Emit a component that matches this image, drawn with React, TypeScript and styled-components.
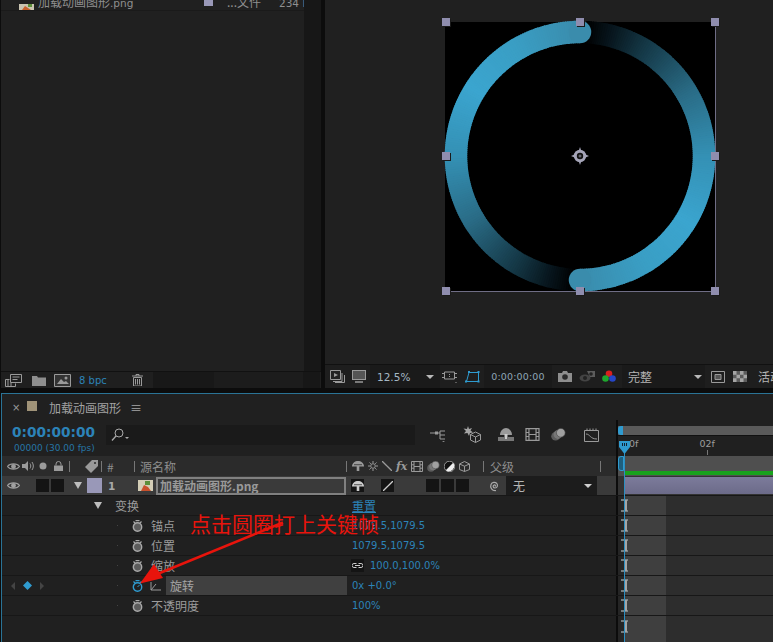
import React from "react";
import styled, { createGlobalStyle } from "styled-components";

const BLUE = "#2c83b8";
const CJK = `"Noto Sans CJK SC", "DejaVu Sans", sans-serif`;
const LATIN = `"DejaVu Sans", "Noto Sans CJK SC", sans-serif`;

const Global = createGlobalStyle`
    html, body { margin: 0; padding: 0; background: #0c0c0c; overflow: hidden; }
    * { box-sizing: border-box; }
`;

const Page = styled.div`
    position: relative;
    width: 773px;
    height: 642px;
    overflow: hidden;
    background: #0c0c0c;
    color: #a2a2a2;
    font-family: ${CJK};
    font-size: 12px;
`;

const TopArea = styled.div`
    display: flex;
    height: 388px;
    gap: 4px;
    padding-left: 1px;
`;

const ProjectPanel = styled.section`
    width: 320px;
    flex-shrink: 0;
    display: flex;
    flex-direction: column;
    background: #202020;
`;

const ProjectBody = styled.div`
    flex: 1;
    display: flex;
    min-height: 0;
`;

const FileList = styled.div`
    flex: 1;
    min-width: 0;
`;

const FileRow = styled.div`
    height: 11px;
    display: flex;
    align-items: flex-end;
    overflow: hidden;
    border-bottom: 1px solid #1a1a1a;
    padding-left: 18px;
    font-size: 12px;
`;

const FileText = styled.span<{ $w: number; $ml?: number }>`
    width: ${(p) => p.$w}px;
    margin-left: ${(p) => p.$ml ?? 0}px;
    flex-shrink: 0;
    line-height: 16px;
    height: 16px;
    white-space: nowrap;
    color: #8f8f8f;
`;

const FileLatin = styled.span`
    font-family: ${LATIN};
    font-size: 10.5px;
`;

const FileSwatch = styled.i`
    width: 9px;
    height: 6px;
    margin: 0 14px 4px 0;
    background: #9998b8;
`;

const ScrollTrack = styled.div`
    width: 17px;
    background: #171717;
`;

const ProjectFooter = styled.div`
    height: 17px;
    display: flex;
    align-items: center;
    border-top: 1px solid #111;
    background: #1f1f1f;
`;

const FootIcons = styled.div`
    width: 152px;
    display: flex;
    align-items: center;
    padding-left: 4px;
`;

const Depth = styled.span`
    font-family: ${LATIN};
    font-size: 10px;
    color: ${BLUE};
    margin: 0 25px 0 8px;
    white-space: nowrap;
`;

const FootField = styled.div<{ $w: number; $c: string }>`
    width: ${(p) => p.$w}px;
    height: 100%;
    background: ${(p) => p.$c};
`;

const ViewerPanel = styled.section`
    flex: 1;
    min-width: 0;
    display: flex;
    flex-direction: column;
    background: #202020;
`;

const Stage = styled.div`
    height: 365px;
    padding: 22px 0 0 120px;
    border-bottom: 1px solid #111;
`;

const Canvas = styled.div`
    position: relative;
    width: 271px;
    height: 270px;
    background: #000;
    border-right: 1px solid #6f6d85;
    border-bottom: 1px solid #6f6d85;
`;

const RingSvg = styled.svg`
    display: block;
    overflow: visible;
`;

const Handle = styled.i<{ $x: number; $y: number }>`
    position: absolute;
    left: ${(p) => p.$x}px;
    top: ${(p) => p.$y}px;
    width: 8px;
    height: 8px;
    background: #8f8dae;
    box-shadow: 1px 1px 0 #1a1a1a;
`;

const Anchor = styled.svg`
    position: absolute;
    left: 126px;
    top: 125px;
`;

const ViewerBar = styled.div`
    flex: 1;
    display: flex;
    align-items: center;
    overflow: hidden;
    padding-left: 5px;
    background: #1e1e1e;
`;

const BarIcon = styled.span<{ $ml?: number }>`
    display: flex;
    margin-left: ${(p) => p.$ml ?? 0}px;
    flex-shrink: 0;
`;

const ZoomField = styled.div`
    width: 70px;
    height: 100%;
    margin-left: 4px;
    flex-shrink: 0;
    display: flex;
    align-items: center;
    padding-left: 7px;
    background: #1a1a1a;
    font-family: ${LATIN};
    font-size: 10.5px;
    color: #a6b8c4;
`;

const TimeField = styled.div`
    width: 68px;
    height: 100%;
    margin-left: 4px;
    flex-shrink: 0;
    display: flex;
    align-items: center;
    justify-content: center;
    background: #1a1a1a;
    font-family: ${LATIN};
    font-size: 9.5px;
    letter-spacing: 0.15px;
    color: #8fa6b6;
`;

const QualityField = styled.div`
    width: 83px;
    height: 100%;
    margin-left: 6px;
    flex-shrink: 0;
    display: flex;
    align-items: center;
    justify-content: space-between;
    padding: 0 3px 0 6px;
    background: #1a1a1a;
    color: #b5b5b5;
`;

const ViewText = styled.span`
    margin-left: 11px;
    flex-shrink: 0;
    white-space: nowrap;
    color: #b5b5b5;
`;

const Caret = styled.i<{ $size?: number; $h?: number; $c?: string }>`
    width: 0;
    height: 0;
    flex-shrink: 0;
    border-left: ${(p) => p.$size ?? 4}px solid transparent;
    border-right: ${(p) => p.$size ?? 4}px solid transparent;
    border-top: ${(p) => p.$h ?? p.$size ?? 4}px solid ${(p) => p.$c ?? "#b8b8b8"};
`;

const TimelinePanel = styled.section`
    margin: 5px 0 0 1px;
    height: 249px;
    display: flex;
    flex-direction: column;
    background: #202020;
    border-top: 1px solid #2a7396;
    border-left: 1px solid #2a7396;
`;

const TabBar = styled.div`
    height: 26px;
    display: flex;
    align-items: center;
    padding-left: 10px;
    font-size: 12px;
`;

const TabClose = styled.span`
    width: 15px;
    font-size: 10px;
    font-family: ${LATIN};
    color: #9a9a9a;
`;

const TabSwatch = styled.i`
    width: 10px;
    height: 10px;
    margin: -2px 12px 0 0;
    background: #a09378;
`;

const TabMenu = styled.span`
    margin-left: 9px;
    font-size: 12px;
    color: #a5a5a5;
`;

const Split = styled.div<{ $h: number; $line?: string }>`
    height: ${(p) => p.$h}px;
    flex-shrink: 0;
    display: flex;
    border-bottom: ${(p) => (p.$line ? `1px solid ${p.$line}` : "none")};
`;

const LeftPane = styled.div<{ $bg?: string }>`
    width: 616px;
    flex-shrink: 0;
    display: flex;
    align-items: center;
    border-right: 2px solid #0c0c0c;
    background: ${(p) => p.$bg ?? "transparent"};
`;

const Track = styled.div<{ $bg?: string }>`
    flex: 1;
    position: relative;
    display: flex;
    flex-direction: column;
    background: ${(p) => p.$bg ?? "transparent"};
`;

const TimeCol = styled.div`
    width: 104px;
    padding: 3px 0 0 10px;
`;

const TimeCode = styled.div`
    font-family: ${LATIN};
    font-weight: 700;
    font-size: 13.7px;
    line-height: 17px;
    color: ${BLUE};
`;

const FrameCode = styled.div`
    font-family: ${LATIN};
    font-size: 9px;
    line-height: 15px;
    padding-left: 2px;
    white-space: nowrap;
    color: #2676a6;
`;

const SearchField = styled.div`
    width: 309px;
    height: 20px;
    margin-top: -7px;
    display: flex;
    align-items: center;
    padding-left: 5px;
    background: #1a1a1a;
`;

const ToolIcon = styled.span<{ $ml: number }>`
    display: flex;
    margin: -7px 0 0 ${(p) => p.$ml}px;
`;

const NavBar = styled.div`
    height: 9px;
    margin-top: 6px;
    display: flex;
    background: #5a5a5a;
`;

const NavHandle = styled.i`
    width: 5px;
    height: 100%;
    background: #2f9bd0;
    border-radius: 3px 0 0 3px;
`;

const Ruler = styled.div`
    flex: 1;
    display: flex;
    font-family: ${LATIN};
    font-size: 9.5px;
    color: #9c9c9c;
    border-top: 1px solid #111;
    padding: 2px 0 0 11px;
    line-height: 12px;
`;

const RulerLabel = styled.span`
    margin-left: 61px;
    display: flex;
    flex-direction: column;
    align-items: center;
`;

const Tick = styled.i`
    width: 1px;
    height: 5px;
    background: #777;
`;

const Cols = styled.div<{ $h: number }>`
    width: 100%;
    height: ${(p) => p.$h}px;
    display: flex;
    align-items: center;
`;

const Col = styled.div<{ $w: number; $pl?: number; $gap?: number }>`
    width: ${(p) => p.$w}px;
    height: 100%;
    flex-shrink: 0;
    display: flex;
    align-items: center;
    gap: ${(p) => p.$gap ?? 0}px;
    padding-left: ${(p) => p.$pl ?? 0}px;
`;

const Sep = styled.i`
    width: 1px;
    height: 11px;
    flex-shrink: 0;
    background: #777;
`;

const HeadText = styled.span<{ $ml: number }>`
    margin-left: ${(p) => p.$ml}px;
    color: #8e8e8e;
    white-space: nowrap;
`;

const FxText = styled.span`
    font-style: italic;
    font-family: "DejaVu Serif", serif;
    font-weight: 700;
    font-size: 11px;
    color: #9a9a9a;
`;

const HeadSlot = styled.span`
    width: 14px;
    display: flex;
    justify-content: center;
`;

const BlackBox = styled.i<{ $ml?: number }>`
    width: 13px;
    height: 13px;
    margin-left: ${(p) => p.$ml ?? 2}px;
    display: flex;
    align-items: center;
    justify-content: center;
    flex-shrink: 0;
    background: #141414;
`;

const Swatch = styled.i`
    width: 15px;
    height: 15px;
    background: #9998b8;
`;

const LayerNumber = styled.b`
    width: 36px;
    padding-left: 6px;
    flex-shrink: 0;
    font-family: ${LATIN};
    font-size: 10.5px;
    color: #a8a8a8;
`;

const NameField = styled.div`
    width: 190px;
    height: 18px;
    flex-shrink: 0;
    display: flex;
    align-items: center;
    padding-left: 2px;
    border: 2px solid #808080;
    font-weight: 700;
    font-size: 12px;
    white-space: nowrap;
    overflow: hidden;
    color: #999;
`;

const ParentField = styled.div`
    width: 91px;
    height: 100%;
    flex-shrink: 0;
    display: flex;
    align-items: center;
    justify-content: space-between;
    padding: 0 5px 0 7px;
    background: #1c1c1c;
    color: #b5b5b5;
`;

const LayerBar = styled.div`
    height: 17px;
    margin: 1px 0 0 6px;
    background: linear-gradient(#7c7b9b, #6c6b89);
`;

const GreenBar = styled.i`
    height: 4px;
    margin: 15px 0 0 6px;
    background: #19a11d;
`;

const WorkBracket = styled.i`
    position: absolute;
    left: 0;
    top: 0;
    width: 6px;
    height: 15px;
    border: 1px solid #2f9bd0;
    background: #1f5f7e;
    border-radius: 3px 0 0 3px;
`;

const PropLine = styled.div`
    height: 20px;
    flex-shrink: 0;
    display: flex;
    border-bottom: 1px solid #171717;
`;

const PropLeft = styled.div`
    width: 616px;
    flex-shrink: 0;
    display: flex;
    align-items: center;
    border-right: 2px solid #0c0c0c;
`;

const KeyCol = styled.div`
    width: 110px;
    display: flex;
    align-items: center;
    gap: 6px;
    padding-left: 7px;
    flex-shrink: 0;
`;

const DotMark = styled.i`
    width: 1px;
    height: 1px;
    margin-left: 5px;
    background: #444;
`;

const WatchSlot = styled.span`
    width: 16px;
    margin-left: 14px;
    display: flex;
    flex-shrink: 0;
`;

const PropName = styled.span`
    width: 201px;
    padding-left: 3px;
    white-space: nowrap;
    color: #9c9c9c;
    flex-shrink: 0;
`;

const GroupName = styled.span`
    width: 237px;
    margin-left: 17px;
    flex-shrink: 0;
    color: #9c9c9c;
`;

const TwirlSlot = styled.span`
    width: 96px;
    padding-left: 92px;
    display: flex;
    flex-shrink: 0;
`;

const GraphSlot = styled.span`
    margin-left: 2px;
    display: flex;
    flex-shrink: 0;
`;

const ActiveName = styled.span`
    width: 181px;
    height: 19px;
    margin: 0 5px;
    display: flex;
    align-items: center;
    padding-left: 4px;
    background: #404040;
    flex-shrink: 0;
    color: #a5a5a5;
`;

const Value = styled.span<{ $ml?: number }>`
    margin-left: ${(p) => p.$ml ?? 0}px;
    font-family: ${LATIN};
    font-size: 10px;
    color: ${BLUE};
    white-space: nowrap;
`;

const ResetLink = styled.span`
    color: ${BLUE};
    text-decoration: underline;
`;

const PropTrack = styled.div`
    flex: 1;
    display: flex;
    align-items: center;
    height: 100%;
`;

const Beam = styled.span`
    width: 10px;
    height: 100%;
    flex-shrink: 0;
    display: flex;
    align-items: center;
    padding-left: 3px;
    background: linear-gradient(90deg, #252525 6px, #3f3f3f 6px);
`;

const Bar = styled.span`
    width: 38px;
    height: 100%;
    background: #3f3f3f;
`;

const BarRest = styled.span`
    flex: 1;
    height: 100%;
    background: #2d2d2d;
`;

const PlayLine = styled.i`
    position: absolute;
    left: 624px;
    top: 452px;
    bottom: 0;
    width: 1px;
    background: #2c8fc2;
`;

const PlayHead = styled.svg`
    position: absolute;
    left: 618px;
    top: 441px;
`;

const Note = styled.div`
    position: absolute;
    left: 190px;
    top: 508px;
    font-size: 21px;
    line-height: 30px;
    white-space: nowrap;
    color: #e8140c;
`;

const NoteArrow = styled.svg`
    position: absolute;
    left: 0;
    top: 0;
    pointer-events: none;
`;

type IconProps = { c?: string };
const G = "#9a9a9a";

const Eye = ({ c = "#a0a0a0" }: IconProps) => (
    <svg width="13" height="9" viewBox="0 0 13 9">
        <path d="M.5 4.5C3 1 10 1 12.5 4.5 10 8 3 8 .5 4.5Z" fill="none" stroke={c} strokeWidth="1.2" />
        <circle cx="6.5" cy="4.5" r="2.4" fill={c} />
    </svg>
);
const Speaker = () => (
    <svg width="12" height="10" viewBox="0 0 12 10">
        <path d="M0 3h3l3-3v10L3 7H0Z" fill={G} />
        <path d="M8 2.5c1 1.500 1 3.500 0 5M10 1c1.800 2.500 1.800 5.500 0 8" fill="none" stroke={G} />
    </svg>
);
const Dot = () => (
    <svg width="8" height="8" viewBox="0 0 8 8"><circle cx="4" cy="4" r="3.500" fill={G} /></svg>
);
const Lock = () => (
    <svg width="9" height="10" viewBox="0 0 9 10">
        <path d="M2 4.500V3a2.500 2.500 0 0 1 5 0v1.500" fill="none" stroke={G} />
        <rect y="4.500" width="9" height="5.500" fill={G} />
    </svg>
);
const Tag = () => (
    <svg width="13" height="13" viewBox="0 0 13 13">
        <path d="M7 0h6v6l-7 7-6-6Z" fill={G} />
        <circle cx="10" cy="3" r="1" fill="#2b2b2b" />
    </svg>
);
const Shy = ({ c = G }: IconProps) => (
    <svg width="12" height="10" viewBox="0 0 12 10">
        <path d="M0 5.500C0 2 3 0 6 0s6 2 6 5.500Z" fill={c} />
        <rect x="4.700" y="5" width="2.600" height="5" fill={c} />
        <path d="M2 3.700h8" stroke="#222" strokeWidth=".7" />
    </svg>
);
const Sun = () => (
    <svg width="10" height="10" viewBox="0 0 10 10">
        <circle cx="5" cy="5" r="2.300" fill="none" stroke={G} />
        <path d="M5 0v2M5 8v2M0 5h2M8 5h2M1.500 1.500l1.300 1.300M7.200 7.200l1.300 1.300M8.500 1.500 7.200 2.800M2.800 7.200 1.500 8.500" stroke={G} />
    </svg>
);
const Slash = ({ c = G }: IconProps) => (
    <svg width="10" height="10" viewBox="0 0 10 10"><path d="M0 0l10 10" stroke={c} strokeWidth="1.300" /></svg>
);
const SlashUp = () => (
    <svg width="10" height="10" viewBox="0 0 10 10"><path d="M0 10 10 0" stroke="#ccc" strokeWidth="1.300" /></svg>
);
const Film = ({ w = 12, h = 11 }: { w?: number; h?: number }) => (
    <svg width={w} height={h} viewBox="0 0 12 11">
        <path d="M.5.5h11v10H.5ZM3 .5v10M9 .5v10M.5 3.800H3M.5 7.200H3M9 3.800h2.500M9 7.200h2.500M3 5.500h6" fill="none" stroke={G} />
    </svg>
);
const Spheres = ({ w = 13, h = 11 }: { w?: number; h?: number }) => (
    <svg width={w} height={h} viewBox="0 0 13 11">
        <circle cx="4" cy="7" r="3.800" fill="#5c5c5c" />
        <circle cx="6" cy="5.500" r="3.800" fill="#777" />
        <circle cx="8.500" cy="4" r="3.800" fill="#a0a0a0" stroke="#444" strokeWidth=".5" />
    </svg>
);
const HalfDisc = () => (
    <svg width="11" height="11" viewBox="0 0 11 11">
        <circle cx="5.500" cy="5.500" r="5.300" fill="#111" stroke="#ddd" strokeWidth=".6" />
        <path d="M9.200 1.800A5.300 5.300 0 0 1 1.800 9.200Z" fill="#eee" />
    </svg>
);
const Cube = () => (
    <svg width="11" height="11" viewBox="0 0 11 11">
        <path d="M5.500.5 10.500 3v5.500L5.500 10.500.5 8.500V3ZM.5 3l5 2.200 5-2.200M5.500 5.200v5.300" fill="none" stroke={G} />
    </svg>
);
const Stopwatch = ({ c = "#a8a8a8" }: IconProps) => (
    <svg width="11" height="12" viewBox="0 0 11 12">
        <circle cx="5.500" cy="7" r="4.200" fill={c === "#a8a8a8" ? "#5c5c5c" : "none"} stroke={c} strokeWidth="1.400" />
        <path d="M1.500 1.500 3 3M9.500 1.500 8 3M3.500 .7h4" stroke={c} strokeWidth="1.200" />
        {c !== "#a8a8a8" && <path d="M5.500 7 7.500 5" stroke={c} />}
    </svg>
);
const Twirl = () => <Caret $size={4.5} $h={7} $c="#bdbdbd" />;

const lerpStops: [number, number[]][] = [
    [0, [58, 140, 172]],
    [30, [58, 158, 196]],
    [58, [59, 165, 207]],
    [90, [52, 144, 180]],
    [120, [42, 108, 134]],
    [150, [20, 54, 68]],
    [166, [7, 20, 27]],
    [177, [0, 0, 0]],
];

function ringColor(deg: number) {
    for (let i = 1; i < lerpStops.length; i++) {
        const [b, cb] = lerpStops[i];
        const [a, ca] = lerpStops[i - 1];
        if (deg <= b) {
            const t = (deg - a) / (b - a);
            return `rgb(${ca.map((v, k) => Math.round(v + (cb[k] - v) * t)).join(",")})`;
        }
    }
    return "#000";
}

const RING_R = 124;

function Arc({ rotate }: { rotate: number }) {
    const r = RING_R;
    const pt = (d: number) => {
        const a = (d * Math.PI) / 180;
        return `${(-Math.sin(a) * r).toFixed(2)} ${(-Math.cos(a) * r).toFixed(2)}`;
    };
    const steps = Array.from({ length: 177 }, (_, i) => i);
    return (
        <g transform={`translate(135 134) rotate(${rotate})`}>
            {steps.map((d) => (
                <path
                    key={d}
                    d={`M${pt(d)} A${r} ${r} 0 0 0 ${pt(d + 1.4)}`}
                    fill="none"
                    stroke={ringColor(d)}
                    strokeWidth="22.500"
                />
            ))}
        </g>
    );
}

function Cap({ rotate }: { rotate: number }) {
    return (
        <g transform={`translate(135 134) rotate(${rotate})`}>
            <circle cx="0" cy={-RING_R} r="11.250" fill={ringColor(0)} />
        </g>
    );
}

const handles = [
    [-3, -4], [131, -4], [266, -4],
    [-3, 130], [266, 130],
    [-3, 265], [131, 265], [266, 265],
];

const properties = [
    { name: "锚点", value: "1079.5,1079.5" },
    { name: "位置", value: "1079.5,1079.5" },
];

function Beams({ empty }: { empty?: boolean }) {
    return (
        <PropTrack>
            <Beam>
                {!empty && (
                    <svg width="7" height="13" viewBox="0 0 7 13">
                        <path d="M0 1h7M0 12h7" stroke="#8f9a9f" strokeWidth="1.400" />
                        <path d="M5 1v11" stroke="#a5a5a5" strokeWidth="2" />
                    </svg>
                )}
            </Beam>
            <Bar />
            <BarRest />
        </PropTrack>
    );
}

function App() {
    return (
        <Page>
            <Global />
            <TopArea>
                <ProjectPanel>
                    <ProjectBody>
                        <FileList>
                            <FileRow>
                                <BarIcon>
                                    <svg width="15" height="6" viewBox="0 0 15 6">
                                        <rect width="15" height="6" fill="#c9c3b0" />
                                        <path d="M3 6l3-4 3 2 3 2Z" fill="#c8602c" />
                                        <path d="M9 0h4v3H9Z" fill="#5c8f3a" />
                                    </svg>
                                </BarIcon>
                                <FileText $w={166} $ml={4}>
                                    加载动画图形<FileLatin>.png</FileLatin>
                                </FileText>
                                <FileSwatch />
                                <FileText $w={52}>...文件</FileText>
                                <FileText $w={24}><FileLatin>234 K</FileLatin></FileText>
                            </FileRow>
                        </FileList>
                        <ScrollTrack />
                    </ProjectBody>
                    <ProjectFooter>
                        <FootIcons>
                            <BarIcon>
                                <svg width="17" height="13" viewBox="0 0 17 13">
                                    <path d="M5.500 .5h11v8h-11ZM7.500 3h7M7.500 5.500h5" fill="none" stroke={G} />
                                    <path d="M.5 5.500h4M.5 5.500v7h10v-3M3 5.500v7M6 9v3.500" fill="none" stroke={G} />
                                </svg>
                            </BarIcon>
                            <BarIcon $ml={10}>
                                <svg width="14" height="11" viewBox="0 0 14 11">
                                    <path d="M0 1h5l1 1.500h8V11H0Z" fill="#8e8e8e" />
                                </svg>
                            </BarIcon>
                            <BarIcon $ml={8}>
                                <svg width="17" height="13" viewBox="0 0 17 13">
                                    <path d="M.5.5h16v12H.5Z" fill="#333" stroke={G} />
                                    <path d="M3 10l4-5 3 3 2-1 3 3Z" fill="#999" />
                                    <circle cx="12" cy="4" r="1.500" fill="#999" />
                                </svg>
                            </BarIcon>
                            <Depth>8 bpc</Depth>
                            <BarIcon>
                                <svg width="11" height="12" viewBox="0 0 11 12">
                                    <path d="M0 2h11M4 2V.5h3V2M1.500 3.500h8V12h-8ZM3.500 5v5.500M5.500 5v5.500M7.500 5v5.500" fill="none" stroke={G} />
                                </svg>
                            </BarIcon>
                        </FootIcons>
                        <FootField $w={61} $c="#181818" />
                        <FootField $w={89} $c="#1c1c1c" />
                        <FootField $w={17} $c="#171717" />
                    </ProjectFooter>
                </ProjectPanel>
                <ViewerPanel>
                    <Stage>
                        <Canvas>
                            <RingSvg width="270" height="269" viewBox="0 0 270 269">
                                <Arc rotate={180} />
                                <Arc rotate={0} />
                                <Cap rotate={180} />
                                <Cap rotate={0} />
                            </RingSvg>
                            {handles.map(([x, y]) => (
                                <Handle key={`${x}-${y}`} $x={x} $y={y} />
                            ))}
                            <Anchor width="18" height="18" viewBox="0 0 18 18">
                                <path d="M9 0 11 6 18 9 11 12 9 18 7 12 0 9 7 6Z" fill="#a5a4b8" />
                                <circle cx="9" cy="9" r="6.200" fill="#a5a4b8" />
                                <circle cx="9" cy="9" r="3.200" fill="#111" />
                                <path d="M9 7.500v3M7.500 9h3" stroke="#a5a4b8" strokeWidth=".7" />
                            </Anchor>
                        </Canvas>
                    </Stage>
                    <ViewerBar>
                        <BarIcon>
                            <svg width="15" height="13" viewBox="0 0 15 13">
                                <path d="M.5.5h10v9H.5Z" fill="#222" stroke={G} />
                                <path d="M12 3v8.500H3M14.500 5v7.500H5" fill="none" stroke={G} />
                                <path d="M4 3l4 2-4 2Z" fill={G} />
                            </svg>
                        </BarIcon>
                        <BarIcon $ml={7}>
                            <svg width="14" height="13" viewBox="0 0 14 13">
                                <rect x=".5" y=".5" width="13" height="9" fill="#555" stroke={G} />
                                <path d="M3 12h8" stroke={G} strokeWidth="1.500" />
                            </svg>
                        </BarIcon>
                        <ZoomField>12.5%</ZoomField>
                        <BarIcon $ml={-14}><Caret $size={4} /></BarIcon>
                        <BarIcon $ml={8}>
                            <svg width="15" height="13" viewBox="0 0 15 13">
                                <path d="M2.500 2h10v7h-10ZM0 3.500h2.500M12.500 3.500H15M0 7.500h2.500M12.500 7.500H15M7 4.500h1M7 6.500h1" fill="none" stroke={G} />
                                <path d="M13 12h2l-1 1Z" fill={G} />
                            </svg>
                        </BarIcon>
                        <BarIcon $ml={8}>
                            <svg width="15" height="13" viewBox="0 0 15 13">
                                <path d="M1.500 11.500 4 2.500h9.500v9Z" fill="none" stroke="#2f9bd0" />
                                <path d="M3 1h2v2H3ZM12.500 1h2v2h-2ZM0 10.500h2v2H0ZM12.500 10.500h2v2h-2Z" fill="#2f9bd0" />
                            </svg>
                        </BarIcon>
                        <TimeField>0:00:00:00</TimeField>
                        <BarIcon $ml={6}>
                            <svg width="14" height="11" viewBox="0 0 14 11">
                                <path d="M0 2h4l1-2h4l1 2h4v9H0Z" fill="#8e8e8e" />
                                <circle cx="7" cy="6" r="2.800" fill="#2a2a2a" />
                            </svg>
                        </BarIcon>
                        <BarIcon $ml={7}>
                            <svg width="16" height="13" viewBox="0 0 16 13">
                                <ellipse cx="6" cy="8" rx="5.500" ry="3.500" fill="#444" />
                                <circle cx="6" cy="8" r="2" fill="#222" />
                                <path d="M8 1h8v6H11Z" fill="#5c5c5c" />
                                <circle cx="12" cy="4" r="1.800" fill="#222" />
                            </svg>
                        </BarIcon>
                        <BarIcon $ml={7}>
                            <svg width="14" height="13" viewBox="0 0 14 13">
                                <circle cx="7" cy="3.700" r="3.300" fill="#d81f1f" />
                                <circle cx="3.500" cy="8.500" r="3.300" fill="#1fa62e" />
                                <circle cx="10.500" cy="8.500" r="3.300" fill="#2546c8" />
                            </svg>
                        </BarIcon>
                        <QualityField>
                            完整
                            <Caret $size={4} />
                        </QualityField>
                        <BarIcon $ml={6}>
                            <svg width="14" height="12" viewBox="0 0 14 12">
                                <path d="M.5.5h13v11H.5Z" fill="none" stroke={G} />
                                <path d="M4 3.500h6v5H4Z" fill="#555" stroke={G} />
                            </svg>
                        </BarIcon>
                        <BarIcon $ml={8}>
                            <svg width="14" height="11" viewBox="0 0 14 11">
                                <rect width="14" height="11" fill="#5c5c5c" />
                                <path d="M0 0h3.500v3.700H0ZM7 0h3.500v3.700H7ZM3.500 3.700H7v3.600H3.500ZM10.500 3.700H14v3.600h-3.500ZM0 7.300h3.500V11H0ZM7 7.300h3.500V11H7Z" fill="#a5a5a5" />
                            </svg>
                        </BarIcon>
                        <ViewText>活动</ViewText>
                    </ViewerBar>
                </ViewerPanel>
            </TopArea>

            <TimelinePanel>
                <TabBar>
                    <TabClose>×</TabClose>
                    <TabSwatch />
                    加载动画图形
                    <TabMenu>≡</TabMenu>
                </TabBar>
                <Split $h={36}>
                    <LeftPane>
                        <TimeCol>
                            <TimeCode>0:00:00:00</TimeCode>
                            <FrameCode>00000 (30.00 fps)</FrameCode>
                        </TimeCol>
                        <SearchField>
                            <svg width="19" height="13" viewBox="0 0 19 13">
                                <circle cx="8" cy="5" r="4" fill="none" stroke="#aaa" />
                                <path d="M5 8 1 12.500" stroke="#aaa" strokeWidth="1.300" />
                                <path d="M14 9h4l-2 2Z" fill="#aaa" />
                            </svg>
                        </SearchField>
                        <ToolIcon $ml={15}>
                            <svg width="16" height="14" viewBox="0 0 16 14">
                                <path d="M0 5h6M6 5h4M10 3h5M10 7h5M10 11h5M10 3v8" stroke={G} fill="none" />
                                <rect x="5" y="3.500" width="3" height="3" fill={G} />
                                <path d="M12 13h3l-1.500 1Z" fill={G} />
                            </svg>
                        </ToolIcon>
                        <ToolIcon $ml={17}>
                            <svg width="18" height="17" viewBox="0 0 18 17">
                                <path d="M5 0l1 3 3-1-1.500 2.500L10 6.500 7 7l-1 3-1.500-3L1 7.500 3 5 .5 2.500 4 3Z" fill="#a5a5a5" />
                                <path d="M12.500 6 17.500 8.500v5.500L12.500 16.500 7.500 14V8.500ZM7.500 8.500l5 2.500 5-2.500M12.500 11v5.500" fill="none" stroke={G} />
                            </svg>
                        </ToolIcon>
                        <ToolIcon $ml={17}>
                            <svg width="16" height="13" viewBox="0 0 16 13">
                                <path d="M2 7C2 3 5 0 8 0s6 3 6 7Z" fill="#9a9a9a" />
                                <rect x="6.500" y="6" width="3" height="5" fill="#ccc" />
                                <path d="M0 9h6v2h4V9h6v4H0Z" fill="#777" />
                            </svg>
                        </ToolIcon>
                        <ToolIcon $ml={11}><Film w={15} h={13} /></ToolIcon>
                        <ToolIcon $ml={11}><Spheres w={15} h={13} /></ToolIcon>
                        <ToolIcon $ml={18}>
                            <svg width="15" height="14" viewBox="0 0 15 14">
                                <path d="M.5 2.500h14v11H.5ZM3 .5v2M6 .5v2M9 .5v2M12 .5v2" fill="none" stroke={G} />
                                <path d="M2 6c4 0 4 5 11 5" fill="none" stroke={G} />
                            </svg>
                        </ToolIcon>
                    </LeftPane>
                    <Track>
                        <NavBar><NavHandle /></NavBar>
                        <Ruler>
                            0f
                            <RulerLabel>
                                02f
                                <Tick />
                            </RulerLabel>
                        </Ruler>
                    </Track>
                </Split>
                <Split $h={20}>
                    <LeftPane $bg="#2b2b2b">
                        <Cols $h={20}>
                            <Col $w={67} $pl={4} $gap={1}>
                                <HeadSlot><Eye c={G} /></HeadSlot>
                                <HeadSlot><Speaker /></HeadSlot>
                                <HeadSlot><Dot /></HeadSlot>
                                <HeadSlot><Lock /></HeadSlot>
                            </Col>
                            <Sep />
                            <Col $w={31} $pl={15}><Tag /></Col>
                            <Sep />
                            <Col $w={32} $pl={5}><HeadText $ml={0}>#</HeadText></Col>
                            <Sep />
                            <Col $w={211}><HeadText $ml={5}>源名称</HeadText></Col>
                            <Sep />
                            <Col $w={136} $pl={5} $gap={4}>
                                <Shy />
                                <Sun />
                                <Slash />
                                <FxText>fx</FxText>
                                <Film />
                                <Spheres />
                                <HalfDisc />
                                <Cube />
                            </Col>
                            <Sep />
                            <Col $w={116}><HeadText $ml={6}>父级</HeadText></Col>
                            <Sep />
                        </Cols>
                    </LeftPane>
                    <Track $bg="#4f4f4f">
                        <WorkBracket />
                        <GreenBar />
                    </Track>
                </Split>
                <Split $h={20} $line="#171717">
                    <LeftPane $bg="#3a3a3a">
                        <Cols $h={19}>
                            <Col $w={34} $pl={5}><Eye /></Col>
                            <BlackBox $ml={0} />
                            <BlackBox />
                            <Col $w={23} $pl={10}><Twirl /></Col>
                            <Swatch />
                            <LayerNumber>1</LayerNumber>
                            <BarIcon>
                                <svg width="15" height="11" viewBox="0 0 15 11">
                                    <rect width="15" height="11" fill="#d3cdb6" />
                                    <path d="M3 11l3-6 4 2 3 4Z" fill="#c8502c" />
                                    <path d="M7 1h5v4H7Z" fill="#5c8f3a" />
                                </svg>
                            </BarIcon>
                            <Col $w={3} />
                            <NameField>加载动画图形.png</NameField>
                            <Col $w={5} />
                            <BlackBox $ml={0}><Shy c="#ccc" /></BlackBox>
                            <Col $w={17} />
                            <BlackBox $ml={0}><SlashUp /></BlackBox>
                            <Col $w={32} />
                            <BlackBox $ml={0} />
                            <BlackBox />
                            <BlackBox />
                            <Col $w={37} $pl={20}>
                                <svg width="12" height="12" viewBox="0 0 12 12">
                                    <path d="M6 6.500c1-1 0-2-1-1.500-1.500.7-1 3 1 3 2.500 0 3-3 1.800-4.500C6.300 1.800 3 2 2 4.500.8 7.500 3 11 7 10.500" fill="none" stroke="#aaa" strokeWidth="1.200" />
                                </svg>
                            </Col>
                            <ParentField>
                                无
                                <Caret $size={4} $c="#cfcfcf" />
                            </ParentField>
                        </Cols>
                    </LeftPane>
                    <Track $bg="#333">
                        <LayerBar />
                    </Track>
                </Split>
                <PropLine>
                    <PropLeft>
                        <TwirlSlot><Twirl /></TwirlSlot>
                        <GroupName>变换</GroupName>
                        <ResetLink>重置</ResetLink>
                    </PropLeft>
                    <Beams />
                </PropLine>
                {properties.map((p) => (
                    <PropLine key={p.name}>
                        <PropLeft>
                            <KeyCol />
                            <DotMark />
                            <WatchSlot><Stopwatch /></WatchSlot>
                            <PropName>{p.name}</PropName>
                            <Value $ml={3}>{p.value}</Value>
                        </PropLeft>
                        <Beams />
                    </PropLine>
                ))}
                <PropLine>
                    <PropLeft>
                        <KeyCol />
                        <DotMark />
                        <WatchSlot><Stopwatch /></WatchSlot>
                        <PropName>缩放</PropName>
                        <BlackBox $ml={2}>
                            <svg width="11" height="5" viewBox="0 0 11 5">
                                <path d="M4.500.5H2a2 2 0 0 0 0 4h2.500M6.500.5H9a2 2 0 0 1 0 4H6.500M3 2.500h5" fill="none" stroke="#ccc" />
                            </svg>
                        </BlackBox>
                        <Value $ml={6}>100.0,100.0%</Value>
                    </PropLeft>
                    <Beams />
                </PropLine>
                <PropLine>
                    <PropLeft>
                        <KeyCol>
                            <Caret style={{ transform: "rotate(90deg)" }} $size={4} $c="#444" />
                            <svg width="9" height="9" viewBox="0 0 9 9">
                                <path d="M4.500 0 9 4.500 4.500 9 0 4.500Z" fill="#2f9bd0" />
                            </svg>
                            <Caret style={{ transform: "rotate(-90deg)" }} $size={4} $c="#444" />
                        </KeyCol>
                        <DotMark />
                        <WatchSlot><Stopwatch c="#2f9bd0" /></WatchSlot>
                        <GraphSlot>
                            <svg width="11" height="10" viewBox="0 0 11 10">
                                <path d="M1 1v8h10M1 9 6 3" fill="none" stroke={G} />
                            </svg>
                        </GraphSlot>
                        <ActiveName>旋转</ActiveName>
                        <Value>0x +0.0°</Value>
                    </PropLeft>
                    <Beams />
                </PropLine>
                <PropLine>
                    <PropLeft>
                        <KeyCol />
                        <DotMark />
                        <WatchSlot><Stopwatch /></WatchSlot>
                        <PropName>不透明度</PropName>
                        <Value $ml={3}>100%</Value>
                    </PropLeft>
                    <Beams />
                </PropLine>
                <Split $h={20}>
                    <LeftPane />
                    <Beams />
                </Split>
                <Split $h={6}>
                    <LeftPane />
                    <Beams empty />
                </Split>
            </TimelinePanel>

            <PlayLine />
            <PlayHead width="13" height="14" viewBox="0 0 13 14">
                <path d="M1 0h11v6l-5.500 7L1 6Z" fill="#2f9bd0" />
                <path d="M4.500 2v3M6.500 2v3M8.500 2v3" stroke="#123" />
            </PlayHead>
            <Note>点击圆圈打上关键帧</Note>
            <NoteArrow width="773" height="642" viewBox="0 0 773 642">
                <path d="M283 522.500 155 575" stroke="#e8140c" strokeWidth="2.500" />
                <path d="M140 583.500 154 564 163 578Z" fill="#e8140c" />
            </NoteArrow>
        </Page>
    );
}

export default App;
